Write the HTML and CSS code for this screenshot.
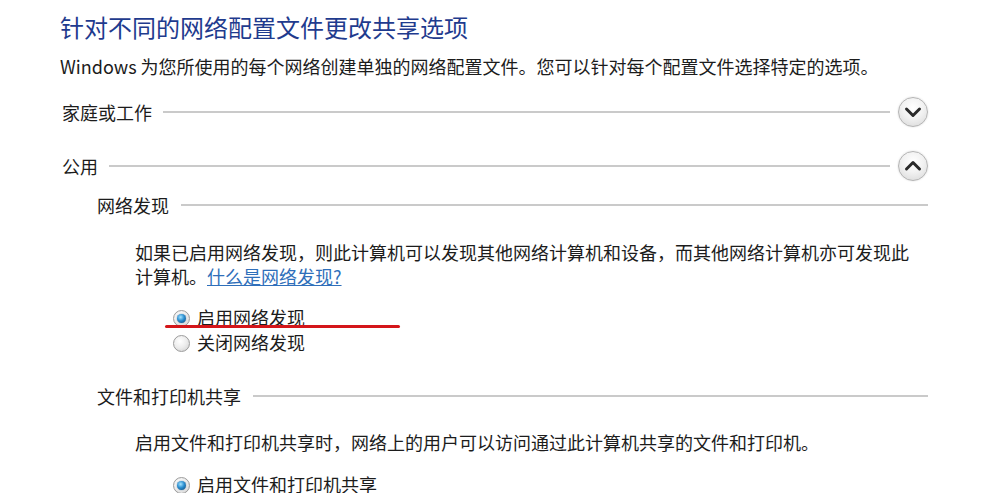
FILE: index.html
```html
<!DOCTYPE html>
<html>

<head>
    <meta charset="utf-8">
    <meta name="viewport" content="width=device-width, initial-scale=1.0">
    <link rel="stylesheet" href="styles.css">
</head>

<body>
    <div class="page">
        <h1 class="title">针对不同的网络配置文件更改共享选项</h1>
        <p class="intro">Windows 为您所使用的每个网络创建单独的网络配置文件。您可以针对每个配置文件选择特定的选项。</p>

        <div class="profile home">
            <span class="label">家庭或工作</span>
            <span class="rule"></span>
            <span class="toggle">
                <svg width="30" height="30" viewBox="0 0 30 30"><polyline points="8.5,12 15,18.5 21.5,12" /></svg>
            </span>
        </div>

        <div class="profile public">
            <span class="label">公用</span>
            <span class="rule"></span>
            <span class="toggle">
                <svg width="30" height="30" viewBox="0 0 30 30"><polyline points="8.5,18 15,11.5 21.5,18" /></svg>
            </span>
        </div>

        <div class="section discovery">
            <span class="label">网络发现</span>
            <span class="rule"></span>
        </div>
        <p class="desc d1">如果已启用网络发现，则此计算机可以发现其他网络计算机和设备，而其他网络计算机亦可发现此计算机。<a href="#">什么是网络发现?</a></p>
        <div class="options o1">
            <div class="option marked">
                <span class="radio on"><span class="dot"></span></span>
                <span>启用网络发现</span>
                <span class="scribble"></span>
            </div>
            <div class="option">
                <span class="radio"></span>
                <span>关闭网络发现</span>
            </div>
        </div>

        <div class="section sharing">
            <span class="label">文件和打印机共享</span>
            <span class="rule"></span>
        </div>
        <p class="desc d2">启用文件和打印机共享时，网络上的用户可以访问通过此计算机共享的文件和打印机。</p>
        <div class="options o2">
            <div class="option">
                <span class="radio on"><span class="dot"></span></span>
                <span>启用文件和打印机共享</span>
            </div>
        </div>
    </div>
</body>

</html>
```

FILE: styles.css
```css
body {
    margin: 0;
    background-color: #fff;
    font-family: "Noto Sans CJK SC", "Noto Sans", sans-serif;
    color: #1c1c1c;
    overflow: hidden;
}

.page {
    width: 868px;
    padding: 11px 0 0 60px;
}

.title {
    margin: 0;
    font-size: 24px;
    line-height: 32px;
    font-weight: normal;
    color: #1f3b8e;
}

.intro {
    margin: 11px 0 0 0;
    font-size: 18px;
    line-height: 24px;
    white-space: nowrap;
}

.profile,
.section {
    display: flex;
    align-items: center;
    font-size: 18px;
    line-height: 24px;
}

.profile {
    height: 30px;
    margin-left: 2px;
}

.home {
    margin-top: 19px;
}

.public {
    margin-top: 24px;
}

.rule {
    flex: 1;
    height: 2px;
    background-color: #cacaca;
}

.profile .rule {
    margin: 0 8px 0 11px;
}

.section .rule {
    margin-left: 12px;
}

.section {
    margin-left: 37px;
    height: 24px;
}

.discovery {
    margin-top: 12px;
}

.sharing {
    margin-top: 29px;
}

.toggle {
    width: 28px;
    height: 28px;
    border: 1px solid #b4b4b4;
    border-radius: 50%;
    background: radial-gradient(circle at 50% 35%, #ffffff 0%, #f2f2f2 45%, #d6d6d6 100%);
    box-shadow: 0 0 2px rgba(0, 0, 0, 0.15);
    display: flex;
}

.toggle svg {
    margin: -1px;
}

.toggle polyline {
    fill: none;
    stroke: #2a2a2a;
    stroke-width: 3;
    stroke-linecap: round;
    stroke-linejoin: round;
}

.desc {
    margin: 0 0 0 75px;
    width: 780px;
    font-size: 18px;
    line-height: 24px;
}

.d1 {
    margin-top: 23px;
}

.d2 {
    margin-top: 22px;
}

.desc a {
    color: #2f6fba;
    text-decoration: underline;
}

.options {
    margin-left: 113px;
    font-size: 18px;
    line-height: 25px;
}

.o1 {
    margin-top: 17px;
}

.o2 {
    margin-top: 18px;
}

.option {
    display: flex;
    align-items: center;
    gap: 7px;
    height: 25px;
}

.marked {
    position: relative;
}

.radio {
    width: 15px;
    height: 15px;
    border: 1px solid #9c9c9c;
    border-radius: 50%;
    background: radial-gradient(circle at 40% 35%, #ffffff 0%, #ececec 50%, #cbcbcb 100%);
    display: flex;
    align-items: center;
    justify-content: center;
    position: relative;
    top: 1px;
}

.radio .dot {
    width: 9px;
    height: 9px;
    border-radius: 50%;
    background: radial-gradient(circle at 40% 35%, #a6e4ff 0%, #2a8ed0 45%, #0b3f6e 100%);
    box-shadow: 0 0 1px #0b3f6e;
}

.scribble {
    position: absolute;
    left: -8px;
    top: 20px;
    width: 235px;
    height: 3px;
    border-radius: 2px;
    background-color: #d4161a;
}
```
